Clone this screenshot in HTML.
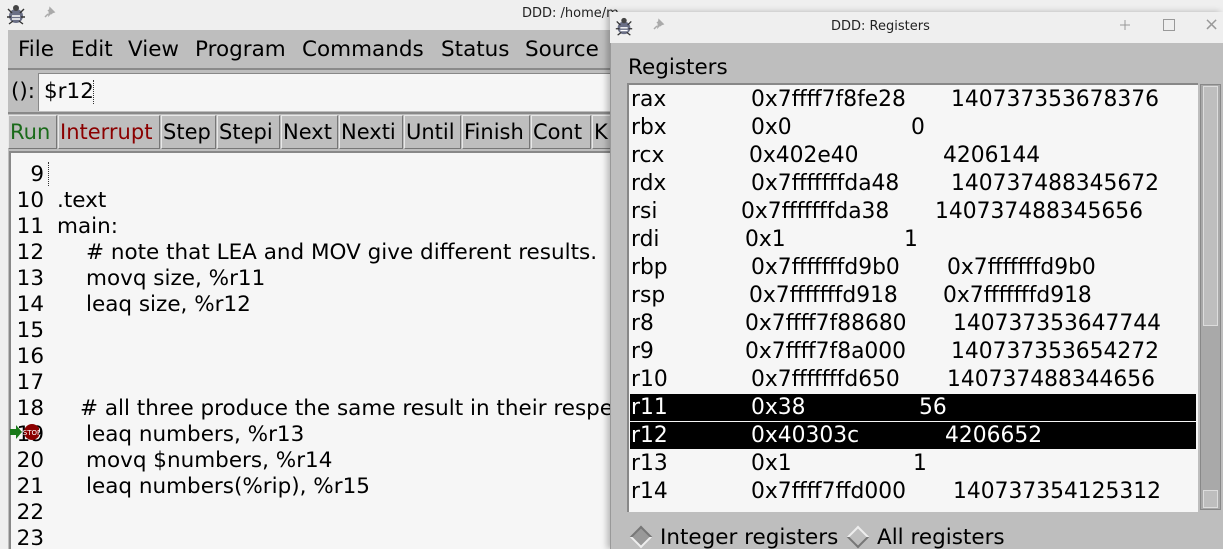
<!DOCTYPE html>
<html style="overflow:hidden;width:1223px;height:549px"><head><style>
*{margin:0;padding:0;box-sizing:border-box}
body{width:1223px;height:549px;overflow:hidden;background:#efefef;font-family:"DejaVu Sans","Liberation Sans",sans-serif;position:relative;color:#000}
.a{position:absolute;white-space:pre}
.t{font-size:21.5px;line-height:26px}
.btn{position:absolute;top:115px;height:34px;background:#bebebe;border:1px solid #e8e8e8;border-right-color:#777;border-bottom-color:#777;font-size:21px;line-height:32px;padding:0 1px;overflow:hidden}
.r{position:absolute;left:630px;font-size:21.8px;line-height:28px;height:28px;width:566px;white-space:pre}
.r span{position:absolute;top:0}
.hl{background:#000;color:#fff}
.n{position:absolute;left:0;width:46px;text-align:right;font-size:21.5px;line-height:26px}
.c{position:absolute;font-size:21.5px;line-height:26px;white-space:pre}
</style></head><body>
<div class="a" style="left:0;top:0;width:1223px;height:30px;background:#efefef"></div>
<svg class="a" style="left:5px;top:3px" width="22" height="22" viewBox="0 0 22 22"><ellipse cx="11" cy="13" rx="7" ry="7" fill="#6a6f86"/><circle cx="11" cy="5" r="3" fill="#444"/><path d="M3 6l4 4M19 6l-4 4M2 14h4M16 14h4M4 21l4-3M18 21l-4-3" stroke="#333" stroke-width="1.4"/><path d="M7 13h8M7 16h8" stroke="#fff" stroke-width="1.5"/></svg>
<svg class="a" style="left:42px;top:6px" width="14" height="14"><path d="M3 11l3-3M6 4l4 4M8 2l4 4-3 1-2 2z" stroke="#aaa" stroke-width="1.5" fill="#aaa"/></svg>
<div class="a" style="left:522px;top:6px;font-size:13px;color:#222">DDD: /home/m</div>
<div class="a" style="left:8px;top:30px;width:610px;height:519px;background:#bebebe"></div>
<div class="a t" style="left:18px;top:36px;line-height:28px">File</div>
<div class="a t" style="left:71px;top:36px;line-height:28px">Edit</div>
<div class="a t" style="left:128px;top:36px;line-height:28px">View</div>
<div class="a t" style="left:195px;top:36px;line-height:28px">Program</div>
<div class="a t" style="left:302px;top:36px;line-height:28px">Commands</div>
<div class="a t" style="left:441px;top:36px;line-height:28px">Status</div>
<div class="a t" style="left:525px;top:36px;line-height:28px">Source</div>
<div class="a" style="left:8px;top:68px;width:610px;height:2px;background:#8a8a8a"></div>
<div class="a t" style="left:11px;top:79px">():</div>
<div class="a" style="left:38px;top:73px;width:580px;height:38px;background:#f6f6f6;border-top:1px solid #888;border-left:1px solid #888"></div>
<div class="a t" style="left:44px;top:79px">$r12</div>
<div class="a" style="left:93px;top:80px;width:2px;height:24px;border-left:1px dotted #333"></div>
<div class="a" style="left:8px;top:112px;width:610px;height:2px;background:#888"></div>
<div class="btn" style="left:8px;width:49px;color:#1a6a1a">Run</div>
<div class="btn" style="left:58px;width:102px;color:#8b0000">Interrupt</div>
<div class="btn" style="left:161px;width:55px">Step</div>
<div class="btn" style="left:217px;width:63px">Stepi</div>
<div class="btn" style="left:281px;width:57px">Next</div>
<div class="btn" style="left:339px;width:64px">Nexti</div>
<div class="btn" style="left:404px;width:57px">Until</div>
<div class="btn" style="left:462px;width:68px">Finish</div>
<div class="btn" style="left:531px;width:60px">Cont</div>
<div class="btn" style="left:592px;width:30px">K</div>
<div class="a" style="left:9px;top:151px;width:605px;height:398px;background:#f6f6f6;border-top:2px solid #888;border-left:2px solid #888;overflow:hidden">
<div class="n" style="top:9px;left:-13px">9</div>
<div class="n" style="top:35px;left:-13px">10</div><div class="c" style="left:46px;top:35px">.text</div>
<div class="n" style="top:61px;left:-13px">11</div><div class="c" style="left:46px;top:61px">main:</div>
<div class="n" style="top:87px;left:-13px">12</div><div class="c" style="left:75px;top:87px"># note that LEA and MOV give different results.</div>
<div class="n" style="top:113px;left:-13px">13</div><div class="c" style="left:75px;top:113px">movq size, %r11</div>
<div class="n" style="top:139px;left:-13px">14</div><div class="c" style="left:75px;top:139px">leaq size, %r12</div>
<div class="n" style="top:165px;left:-13px">15</div>
<div class="n" style="top:191px;left:-13px">16</div>
<div class="n" style="top:217px;left:-13px">17</div>
<div class="n" style="top:243px;left:-13px">18</div><div class="c" style="left:69px;top:243px"># all three produce the same result in their respe</div>
<div class="n" style="top:269px;left:-13px">19</div><div class="c" style="left:75px;top:269px">leaq numbers, %r13</div>
<div class="n" style="top:295px;left:-13px">20</div><div class="c" style="left:75px;top:295px">movq $numbers, %r14</div>
<div class="n" style="top:321px;left:-13px">21</div><div class="c" style="left:75px;top:321px">leaq numbers(%rip), %r15</div>
<div class="n" style="top:347px;left:-13px">22</div>
<div class="n" style="top:373px;left:-13px">23</div>
</div>
<div class="a" style="left:48px;top:162px;width:2px;height:24px;border-left:1px dotted #333"></div>
<svg class="a" style="left:9px;top:423px" width="30" height="18"><path d="M1 6h6V2l6 7-6 7v-4H1z" fill="#1a7a1a"/><circle cx="23" cy="9" r="8" fill="#8b0000"/><text x="23" y="12" font-size="7" fill="#fff" text-anchor="middle" font-family="DejaVu Sans">STOP</text></svg>
<div class="a" style="left:610px;top:12px;width:613px;height:537px;background:#bebebe;border-left:1px solid #999;box-shadow:-3px 0 6px rgba(0,0,0,.25)"></div>
<div class="a" style="left:610px;top:12px;width:613px;height:31px;background:#efefef"></div>
<svg class="a" style="left:614px;top:15px" width="20" height="22" viewBox="0 0 22 22"><ellipse cx="11" cy="13" rx="7" ry="7" fill="#6a6f86"/><circle cx="11" cy="5" r="3" fill="#444"/><path d="M3 6l4 4M19 6l-4 4M2 14h4M16 14h4M4 21l4-3M18 21l-4-3" stroke="#333" stroke-width="1.4"/><path d="M7 13h8M7 16h8" stroke="#fff" stroke-width="1.5"/></svg>
<svg class="a" style="left:651px;top:18px" width="14" height="14"><path d="M3 11l3-3M6 4l4 4M8 2l4 4-3 1-2 2z" stroke="#aaa" stroke-width="1.5" fill="#aaa"/></svg>
<div class="a" style="left:831px;top:19px;font-size:13px;color:#222">DDD: Registers</div>
<svg class="a" style="left:1118px;top:18px" width="14" height="14"><path d="M7 2v5H2M12 7H7v5" stroke="#999" fill="none"/></svg>
<div class="a" style="left:1163px;top:19px;width:12px;height:12px;border:1px solid #999"></div>
<div class="a" style="left:1204px;top:14px;color:#999;font-size:18px">×</div>
<div class="a t" style="left:628px;top:55px">Registers</div>
<div class="a" style="left:627px;top:83px;width:571px;height:429px;background:#f6f6f6;border-top:2px solid #888;border-left:2px solid #888"></div>
<div class="a" style="left:1200px;top:84px;width:21px;height:426px;background:#a9a9a9;border:1px solid #888"></div>
<div class="a" style="left:1203px;top:86px;width:15px;height:240px;background:#bebebe;border:1px solid #ddd"></div>
<div class="a" style="left:1203px;top:490px;width:15px;height:18px;background:#bebebe;border:1px solid #ddd"></div>

<div class="r" style="top:86px"><span style="left:1px">rax</span><span style="left:121px">0x7ffff7f8fe28</span><span style="left:321px">140737353678376</span></div>
<div class="r" style="top:114px"><span style="left:1px">rbx</span><span style="left:121px">0x0</span><span style="left:281px">0</span></div>
<div class="r" style="top:142px"><span style="left:1px">rcx</span><span style="left:119px">0x402e40</span><span style="left:313px">4206144</span></div>
<div class="r" style="top:170px"><span style="left:1px">rdx</span><span style="left:121px">0x7fffffffda48</span><span style="left:321px">140737488345672</span></div>
<div class="r" style="top:198px"><span style="left:1px">rsi</span><span style="left:111px">0x7fffffffda38</span><span style="left:305px">140737488345656</span></div>
<div class="r" style="top:226px"><span style="left:1px">rdi</span><span style="left:115px">0x1</span><span style="left:274px">1</span></div>
<div class="r" style="top:254px"><span style="left:1px">rbp</span><span style="left:121px">0x7fffffffd9b0</span><span style="left:317px">0x7fffffffd9b0</span></div>
<div class="r" style="top:282px"><span style="left:1px">rsp</span><span style="left:119px">0x7fffffffd918</span><span style="left:313px">0x7fffffffd918</span></div>
<div class="r" style="top:310px"><span style="left:1px">r8</span><span style="left:115px">0x7ffff7f88680</span><span style="left:323px">140737353647744</span></div>
<div class="r" style="top:338px"><span style="left:1px">r9</span><span style="left:115px">0x7ffff7f8a000</span><span style="left:321px">140737353654272</span></div>
<div class="r" style="top:366px"><span style="left:1px">r10</span><span style="left:121px">0x7fffffffd650</span><span style="left:317px">140737488344656</span></div>
<div class="r hl" style="top:394px;height:27px"><span style="left:1px">r11</span><span style="left:121px">0x38</span><span style="left:289px">56</span></div>
<div class="r hl" style="top:422px;height:27px"><span style="left:1px">r12</span><span style="left:121px">0x40303c</span><span style="left:315px">4206652</span></div>
<div class="r" style="top:450px"><span style="left:1px">r13</span><span style="left:121px">0x1</span><span style="left:283px">1</span></div>
<div class="r" style="top:478px"><span style="left:1px">r14</span><span style="left:121px">0x7ffff7ffd000</span><span style="left:323px">140737354125312</span></div>

<div class="a" style="left:633px;top:529px;width:16px;height:16px;transform:rotate(45deg);background:#999;border:2px solid;border-color:#777 #eee #eee #777"></div>
<div class="a t" style="left:660px;top:525px">Integer registers</div>
<div class="a" style="left:850px;top:529px;width:16px;height:16px;transform:rotate(45deg);background:#bebebe;border:2px solid;border-color:#eee #777 #777 #eee"></div>
<div class="a t" style="left:877px;top:525px">All registers</div>
</body></html>
